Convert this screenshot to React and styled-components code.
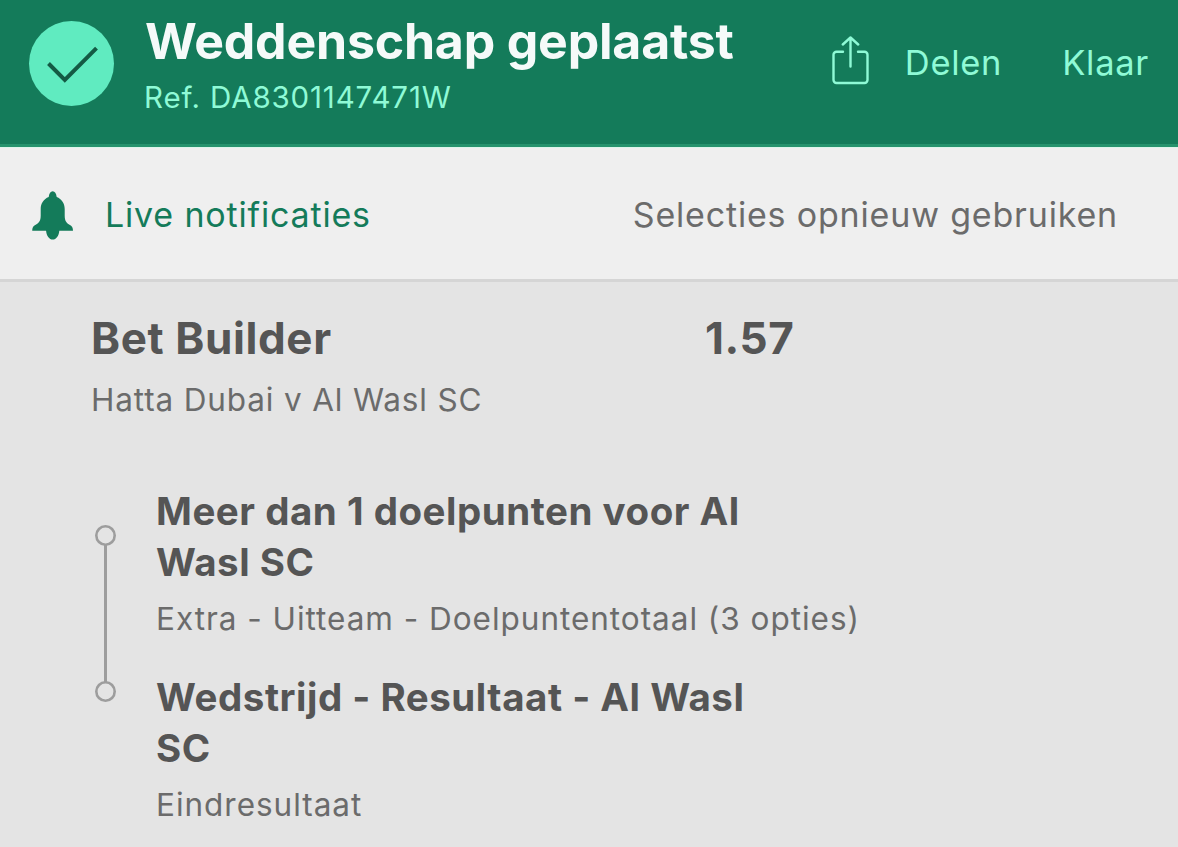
import React from "react";
import styled, { createGlobalStyle } from "styled-components";

const GlobalStyle = createGlobalStyle`
    * {
        box-sizing: border-box;
    }
    body {
        margin: 0;
        background-color: #e4e4e4;
        font-family: Inter, "Liberation Sans", sans-serif;
        font-variant-ligatures: none;
        overflow: hidden;
    }
`;

const Container = styled.div`
    display: flex;
    flex-direction: column;
    width: 1178px;
    height: 847px;
    overflow: hidden;
    background-color: #e4e4e4;
`;

const Header = styled.header`
    display: flex;
    flex-shrink: 0;
    align-items: flex-start;
    height: 147px;
    padding: 11px 29px 0 29px;
    background-color: #147b5a;
    border-bottom: 3px solid #26936d;
`;

const CheckBadge = styled.div`
    display: flex;
    width: 85px;
    height: 85px;
    margin: 10px 30px 0 0;
    border-radius: 50%;
    background-color: #60ebc0;
`;

const HeaderText = styled.div`
    flex: 1;
    white-space: nowrap;
`;

const Title = styled.h1`
    margin: 0 0 8px 1px;
    font-size: 50px;
    font-weight: 700;
    line-height: 60px;
    letter-spacing: -0.2px;
    color: #f5faf9;
`;

const Reference = styled.div`
    font-size: 29.5px;
    line-height: 36px;
    letter-spacing: 0.85px;
    color: #8ffad6;
`;

const HeaderButton = styled.button`
    display: flex;
    align-items: center;
    margin: 32px 0 0 ${(props) => props.$gap || 0}px;
    padding: 0;
    border: none;
    background: none;
    font-family: inherit;
    font-size: 34.5px;
    line-height: 40px;
    letter-spacing: 0.7px;
    color: #8ffad6;
    white-space: nowrap;

    svg {
        margin: -7px 36px -3px 0;
    }
`;

const ActionBar = styled.div`
    display: flex;
    flex-shrink: 0;
    justify-content: space-between;
    align-items: center;
    height: 135px;
    padding: 2px 60px 0 31px;
    background-color: #efefef;
    border-top: 1px solid #dcf5ea;
    border-bottom: 3px solid #d5d5d5;
`;

const ActionButton = styled.button`
    display: flex;
    align-items: center;
    padding: 0;
    border: none;
    background: none;
    font-family: inherit;
    font-size: 34px;
    line-height: 42px;
    letter-spacing: 0.82px;
    color: ${(props) => props.$color};
    white-space: nowrap;

    svg {
        margin-right: 31px;
    }
`;

const BetContainer = styled.main`
    padding: 30px 0 0 91px;
`;

const BetRow = styled.div`
    display: flex;
    font-size: 44px;
    font-weight: 700;
    line-height: 52px;
    letter-spacing: 0.6px;
    color: #555555;
`;

const BetName = styled.h2`
    width: 614px;
    margin: 0;
    font-size: inherit;
`;

const Fixture = styled.div`
    margin-top: 16px;
    font-size: 31.5px;
    line-height: 40px;
    letter-spacing: 0.85px;
    color: #6b6b6b;
`;

const Legs = styled.div`
    display: flex;
    margin-top: 66px;
`;

const Timeline = styled.div`
    display: flex;
    flex-direction: column;
    align-items: center;
    width: 21px;
    height: 177px;
    margin: 39px 40px 0 4px;
`;

const Dot = styled.div`
    width: 21px;
    height: 21px;
    border-radius: 50%;
    box-shadow: inset 0 0 0 2.6px #9d9d9d;
`;

const Line = styled.div`
    flex: 1;
    width: 3px;
    margin: -1px 0;
    background-color: #9d9d9d;
`;

const Leg = styled.div`
    height: 186px;
`;

const LegName = styled.h3`
    width: 620px;
    margin: 0 0 11px;
    font-size: 38.5px;
    font-weight: 700;
    line-height: 51px;
    letter-spacing: 0.52px;
    color: #555555;
`;

const LegMarket = styled.div`
    font-size: 31.5px;
    line-height: 40px;
    letter-spacing: 0.97px;
    color: #6b6b6b;
`;

const CheckIcon = () => (
    <svg width="85" height="85" viewBox="0 0 85 85" fill="none">
        <path d="M19.500 42.500 35.800 58.800 67.500 27.100" stroke="#145a44" strokeWidth="4" />
    </svg>
);

const ShareIcon = () => (
    <svg
        width="37"
        height="50"
        viewBox="0 0 37 50"
        fill="none"
        stroke="currentColor"
        strokeWidth="2.4"
        strokeLinecap="round"
        strokeLinejoin="round"
    >
        <path d="M11 15.7H4.500a3 3 0 0 0-3 3V44a3 3 0 0 0 3 3h28a3 3 0 0 0 3-3V18.700a3 3 0 0 0-3-3H26" />
        <path d="M18.500 30.500V2M10.800 8.500l7.700-7L26.200 8.500" />
    </svg>
);

const BellIcon = () => (
    <svg width="43" height="50" viewBox="0 0 43 50" fill="currentColor">
        <path d="M21.700 1.300c2.200 0 3.500 2.200 4 5.700 5 2 8 6.500 8 12v6.500c0 5 1.500 7.500 4.800 9.200 2.500 1.300 3.500 3 3.500 6H28.300c-.3 5-3.100 8.800-6.600 8.800s-6.300-3.800-6.600-8.800H1.200c0-3 1-4.700 3.500-6 3.500-1.700 5-4.200 5-9.200V19c0-5.500 3-10 8-12 .5-3.500 1.800-5.700 4-5.700z" />
    </svg>
);

const legs = [
    {
        name: "Meer dan 1 doelpunten voor Al Wasl SC",
        market: "Extra - Uitteam - Doelpuntentotaal (3 opties)",
    },
    {
        name: "Wedstrijd - Resultaat - Al Wasl SC",
        market: "Eindresultaat",
    },
];

const App = () => {
    return (
        <Container>
            <GlobalStyle />
            <Header>
                <CheckBadge>
                    <CheckIcon />
                </CheckBadge>
                <HeaderText>
                    <Title>Weddenschap geplaatst</Title>
                    <Reference>Ref. DA8301147471W</Reference>
                </HeaderText>
                <HeaderButton>
                    <ShareIcon />
                    Delen
                </HeaderButton>
                <HeaderButton $gap={60}>Klaar</HeaderButton>
            </Header>

            <ActionBar>
                <ActionButton $color="#147b5a">
                    <BellIcon />
                    Live notificaties
                </ActionButton>
                <ActionButton $color="#6b6b6b">
                    Selecties opnieuw gebruiken
                </ActionButton>
            </ActionBar>

            <BetContainer>
                <BetRow>
                    <BetName>Bet Builder</BetName>
                    <div>1.57</div>
                </BetRow>
                <Fixture>Hatta Dubai v Al Wasl SC</Fixture>

                <Legs>
                    <Timeline>
                        <Dot />
                        <Line />
                        <Dot />
                    </Timeline>
                    <div>
                        {legs.map((leg) => (
                            <Leg key={leg.market}>
                                <LegName>{leg.name}</LegName>
                                <LegMarket>{leg.market}</LegMarket>
                            </Leg>
                        ))}
                    </div>
                </Legs>
            </BetContainer>
        </Container>
    );
};

export default App;
